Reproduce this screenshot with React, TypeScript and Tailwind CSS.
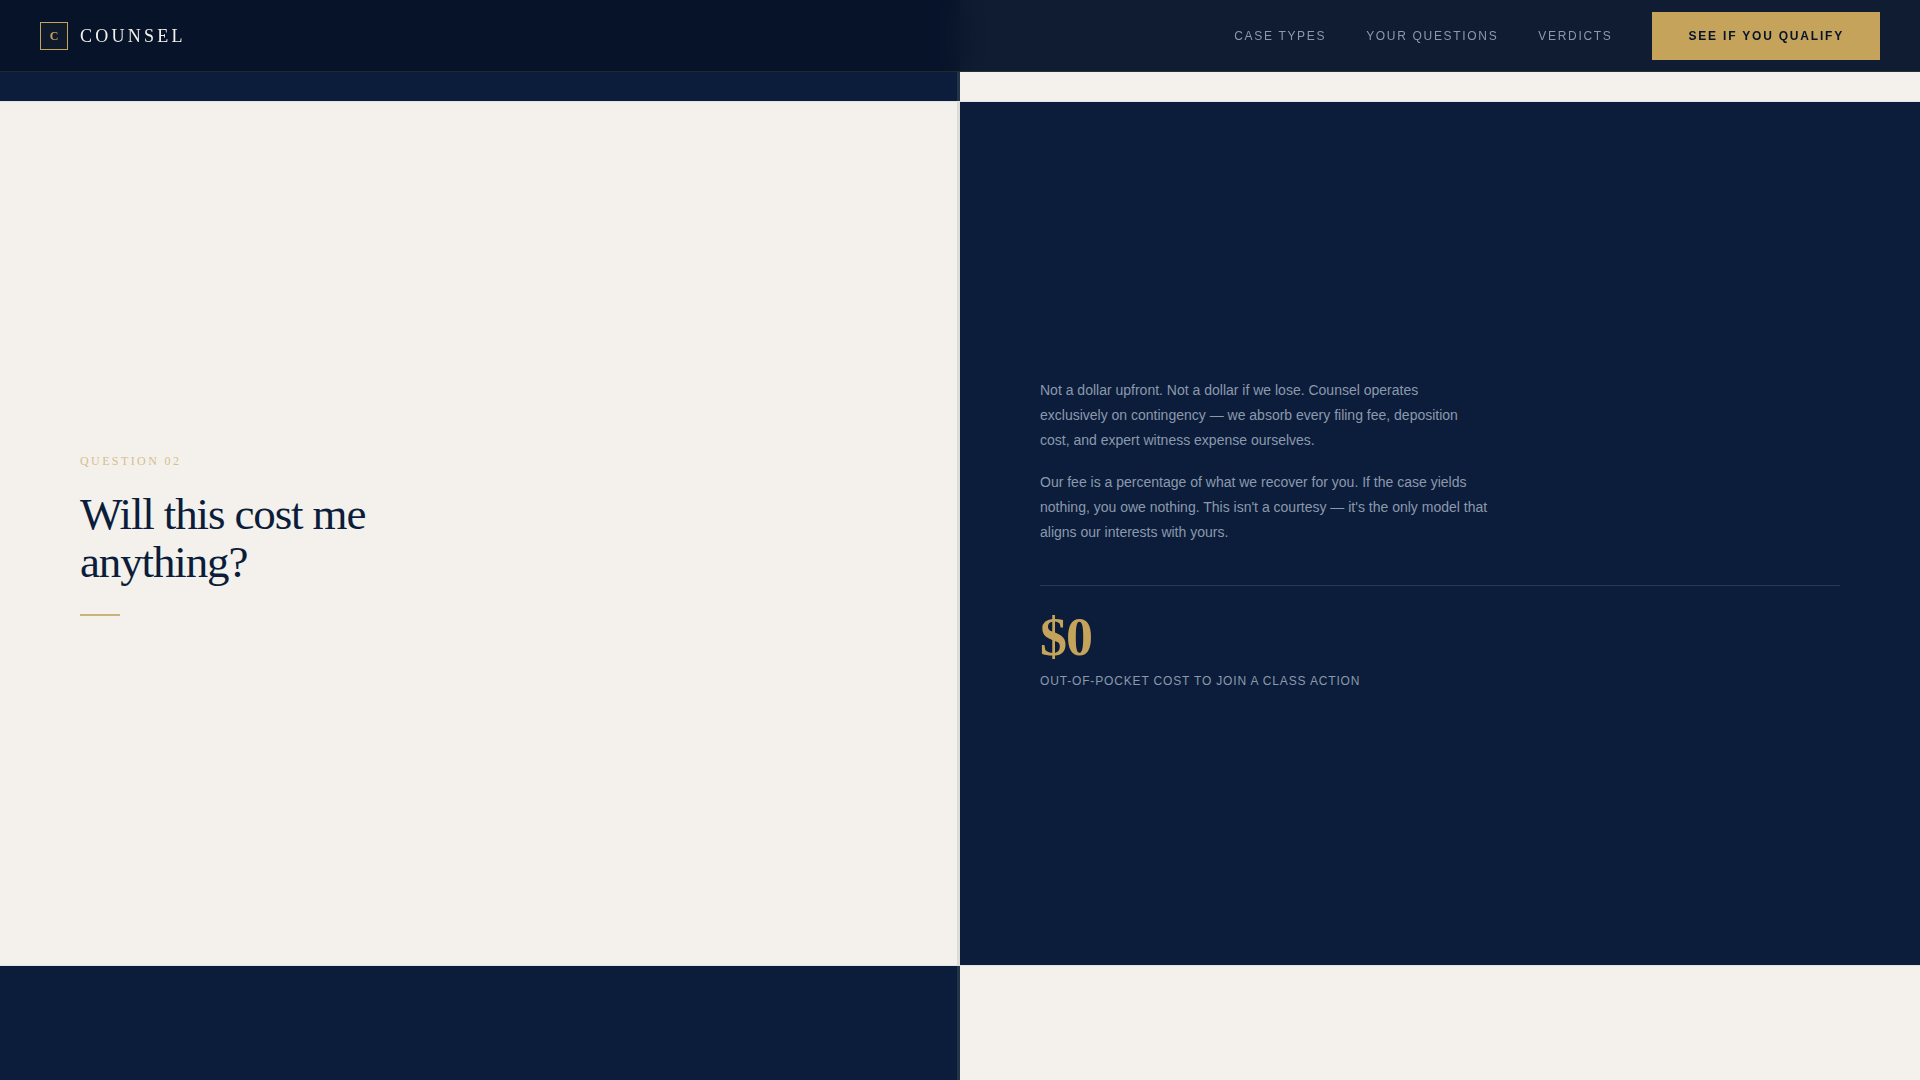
const navLinks = [
  { label: "Case Types", href: "#case-types" },
  { label: "Your Questions", href: "#questions" },
  { label: "Verdicts", href: "#verdicts" },
];

const Header = () => {
  return (
    <header className="fixed top-0 z-50 flex h-[72px] w-full items-center justify-between border-b border-[#c5a35a]/15 bg-[#061329]/96 px-10 backdrop-blur-lg">
      <a href="#" className="flex items-center gap-3">
        <span className="flex h-7 w-7 items-center justify-center border border-[#c5a35a] bg-[#c5a35a]/5 font-['Liberation_Serif',serif] text-xs font-bold text-[#c5a35a]">
          C
        </span>
        <span className="font-['Liberation_Serif',serif] text-lg uppercase tracking-[0.18em] text-[#f4f1ec]">
          Counsel
        </span>
      </a>
      <nav className="flex items-center gap-10">
        {navLinks.map((link) => (
          <a
            key={link.label}
            href={link.href}
            className="text-xs uppercase tracking-[0.14em] text-[#8b99ad]"
          >
            {link.label}
          </a>
        ))}
        <button className="h-12 bg-[#c5a35a] px-9 text-xs font-bold uppercase tracking-[0.15em] text-[#061329]">
          See if you qualify
        </button>
      </nav>
    </header>
  );
};

const Question = () => {
  return (
    <section
      id="questions"
      className="grid min-h-[80vh] grid-cols-2 border-b border-[#e2e3e6]"
    >
      <div className="flex flex-col justify-center border-r-[3px] border-[#7c9283]/20 bg-[#f4f1ec] px-20">
        <p className="mb-5 font-['Liberation_Serif',serif] text-xs uppercase leading-[18px] tracking-[0.2em] text-[#d4be8e]">
          Question 02
        </p>
        <h2 className="max-w-[380px] font-['Liberation_Serif',serif] text-[45px] leading-[48px] tracking-tight text-[#0b1d3a]">
          Will this cost me anything?
        </h2>
        <div className="mt-7 h-0.5 w-10 bg-[#c9b47c]" />
      </div>
      <div className="flex flex-col justify-center bg-[#0b1d3a] px-20">
        <div className="flex max-w-md flex-col gap-[17px] text-sm leading-[25px] text-[#8b99ad]">
          <p>
            Not a dollar upfront. Not a dollar if we lose. Counsel operates
            exclusively on contingency — we absorb every filing fee, deposition
            cost, and expert witness expense ourselves.
          </p>
          <p>
            Our fee is a percentage of what we recover for you. If the case
            yields nothing, you owe nothing. This isn't a courtesy — it's the
            only model that aligns our interests with yours.
          </p>
        </div>
        <div className="mt-10 border-t border-white/12 pt-6">
          <p className="font-['Liberation_Serif',serif] text-[54px] font-bold leading-[54px] tracking-[-0.02em] text-[#c5a35a]">
            $0
          </p>
          <p className="mt-2 text-xs uppercase leading-[18px] tracking-[0.07em] text-[#8b99ad]">
            Out-of-pocket cost to join a class action
          </p>
        </div>
      </div>
    </section>
  );
};

const App = () => {
  return (
    <div className="flex min-h-screen flex-col bg-[#f4f1ec] font-['Liberation_Sans',sans-serif]">
      <Header />
      <section className="grid h-[102px] grid-cols-2 border-b border-[#e2e3e6]">
        <div className="border-r-[3px] border-[#7c9283]/20 bg-[#0b1d3a]" />
        <div className="bg-[#f4f1ec]" />
      </section>
      <Question />
      <section className="grid grow grid-cols-2">
        <div className="border-r-[3px] border-[#7c9283]/20 bg-[#0b1d3a]" />
        <div className="bg-[#f4f1ec]" />
      </section>
    </div>
  );
};

export default App;
